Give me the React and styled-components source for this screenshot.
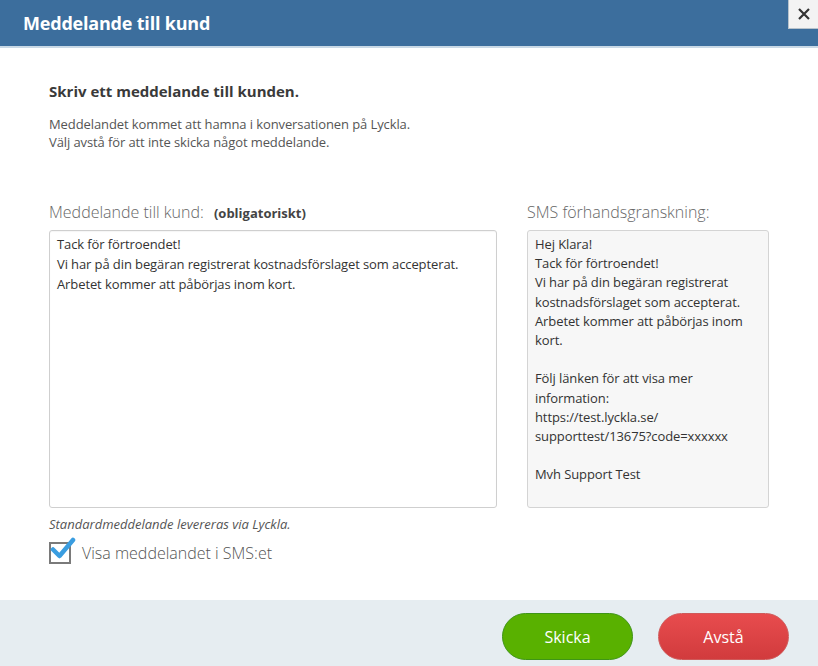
import React from "react";
import styled, { createGlobalStyle } from "styled-components";

const GlobalStyle = createGlobalStyle`
  html, body {
    margin: 0;
    padding: 0;
    background: #fff;
  }
  body {
    font-family: "Open Sans", "Noto Sans", sans-serif;
    color: #333;
  }
`;

const previewLines = [
  "Hej Klara!",
  "Tack för förtroendet!",
  "Vi har på din begäran registrerat",
  "kostnadsförslaget som accepterat.",
  "Arbetet kommer att påbörjas inom",
  "kort.",
  "",
  "Följ länken för att visa mer",
  "information:",
  "https://test.lyckla.se/",
  "supporttest/13675?code=xxxxxx",
  "",
  "Mvh Support Test",
];

const messageLines = [
  "Tack för förtroendet!",
  "Vi har på din begäran registrerat kostnadsförslaget som accepterat.",
  "Arbetet kommer att påbörjas inom kort.",
];

function CheckIcon() {
  return (
    <svg width="26" height="26" viewBox="0 0 26 26">
      <path
        d="M3 13.5 L9.5 20 L23 4"
        fill="none"
        stroke="#3a9de0"
        strokeWidth="4.5"
        strokeLinecap="round"
        strokeLinejoin="round"
      />
    </svg>
  );
}

export default function App() {
  return (
    <>
      <GlobalStyle />
      <Dialog>
        <Header>
          <Title>Meddelande till kund</Title>
          <CloseButton aria-label="Stäng">
            <svg width="14" height="14" viewBox="0 0 14 14">
              <path d="M2 2 L12 12 M12 2 L2 12" stroke="#333" strokeWidth="2.2" />
            </svg>
          </CloseButton>
        </Header>

        <Body>
          <Heading>Skriv ett meddelande till kunden.</Heading>
          <Intro>
            Meddelandet kommet att hamna i konversationen på Lyckla.
            <br />
            Välj avstå för att inte skicka något meddelande.
          </Intro>

          <Columns>
            <Column>
              <Label>
                Meddelande till kund: <Required>(obligatoriskt)</Required>
              </Label>
              <MessageBox>
                {messageLines.map((l, i) => (
                  <Line key={i}>{l}</Line>
                ))}
              </MessageBox>
              <Hint>Standardmeddelande levereras via Lyckla.</Hint>
              <CheckRow>
                <CheckBox>
                  <CheckMark>
                    <CheckIcon />
                  </CheckMark>
                </CheckBox>
                <CheckLabel>Visa meddelandet i SMS:et</CheckLabel>
              </CheckRow>
            </Column>

            <Column>
              <Label>SMS förhandsgranskning:</Label>
              <PreviewBox>
                {previewLines.map((l, i) => (
                  <PreviewLine key={i}>{l || "\u00a0"}</PreviewLine>
                ))}
              </PreviewBox>
            </Column>
          </Columns>
        </Body>

        <Footer>
          <PillButton $variant="send">Skicka</PillButton>
          <PillButton $variant="cancel">Avstå</PillButton>
        </Footer>
      </Dialog>
    </>
  );
}

const Dialog = styled.div`
  width: 818px;
  height: 666px;
  display: flex;
  flex-direction: column;
  background: #fff;
  overflow: hidden;
`;

const Header = styled.div`
  height: 46px;
  flex-shrink: 0;
  display: flex;
  align-items: flex-start;
  justify-content: space-between;
  background: #3c6e9d;
  border-bottom: 2px solid #c9d9e6;
`;

const Title = styled.h1`
  margin: 0;
  padding: 11px 0 0 23px;
  font-size: 18px;
  font-weight: 700;
  color: #fff;
  letter-spacing: -0.2px;
`;

const CloseButton = styled.button`
  width: 30px;
  height: 29px;
  padding: 0;
  display: flex;
  align-items: center;
  justify-content: center;
  background: #f3f3f3;
  border: none;
  border-left: 1px solid #b8c3cc;
  border-bottom: 1px solid #b8c3cc;
  cursor: pointer;
`;

const Body = styled.div`
  flex: 1;
  padding: 33px 49px 0 49px;
`;

const Heading = styled.h2`
  margin: 0;
  font-size: 15px;
  font-weight: 700;
  color: #3a3a3a;
`;

const Intro = styled.p`
  margin: 14px 0 0;
  font-size: 13px;
  line-height: 18px;
  color: #555;
  letter-spacing: -0.1px;
`;

const Columns = styled.div`
  display: grid;
  grid-template-columns: 448px 242px;
  column-gap: 30px;
  margin-top: 50px;
`;

const Column = styled.div`
  display: flex;
  flex-direction: column;
`;

const Label = styled.div`
  font-size: 16px;
  font-weight: 300;
  color: #666;
  height: 29px;
  white-space: nowrap;
`;

const Required = styled.span`
  margin-left: 6px;
  font-size: 13px;
  font-weight: 700;
  color: #444;
`;

const MessageBox = styled.div`
  height: 270px;
  border: 1px solid #cfcfcf;
  border-radius: 3px;
  padding: 3px 7px;
  box-shadow: inset 0 1px 1px rgba(0, 0, 0, 0.04);
`;

const Line = styled.div`
  font-size: 13px;
  line-height: 20px;
  color: #333;
  letter-spacing: -0.1px;
  white-space: nowrap;
`;

const PreviewBox = styled.div`
  height: 268px;
  border: 1px solid #d4d4d4;
  border-radius: 3px;
  background: #f7f7f7;
  padding: 4px 7px;
`;

const PreviewLine = styled.div`
  font-size: 13px;
  line-height: 19.2px;
  color: #333;
  letter-spacing: -0.1px;
  white-space: nowrap;
`;

const Hint = styled.div`
  margin-top: 7px;
  font-size: 13px;
  font-style: italic;
  color: #555;
`;

const CheckRow = styled.div`
  display: flex;
  align-items: center;
  gap: 11px;
  margin-top: 9px;
`;

const CheckBox = styled.span`
  position: relative;
  width: 18px;
  height: 18px;
  border: 2px solid #7a7a7a;
  background: #fff;
  flex-shrink: 0;
`;

const CheckMark = styled.span`
  position: absolute;
  left: -1px;
  top: -8px;
`;

const CheckLabel = styled.span`
  font-size: 16px;
  font-weight: 300;
  color: #555;
`;

const Footer = styled.div`
  height: 66px;
  flex-shrink: 0;
  display: flex;
  align-items: center;
  justify-content: flex-end;
  gap: 25px;
  padding: 0 29px 0 0;
  background: #e6edf1;
`;

const PillButton = styled.button`
  width: 131px;
  height: 47px;
  margin-top: 7px;
  border-radius: 24px;
  font-family: "Open Sans", "Noto Sans", sans-serif;
  font-size: 16px;
  color: #fff;
  cursor: pointer;
  background: ${(p) =>
    p.$variant === "send"
      ? "#59b100"
      : "linear-gradient(to bottom, #e84c4e, #d13b3d)"};
  border: 1px solid ${(p) => (p.$variant === "send" ? "#3f9517" : "#cf5a5a")};
`;
